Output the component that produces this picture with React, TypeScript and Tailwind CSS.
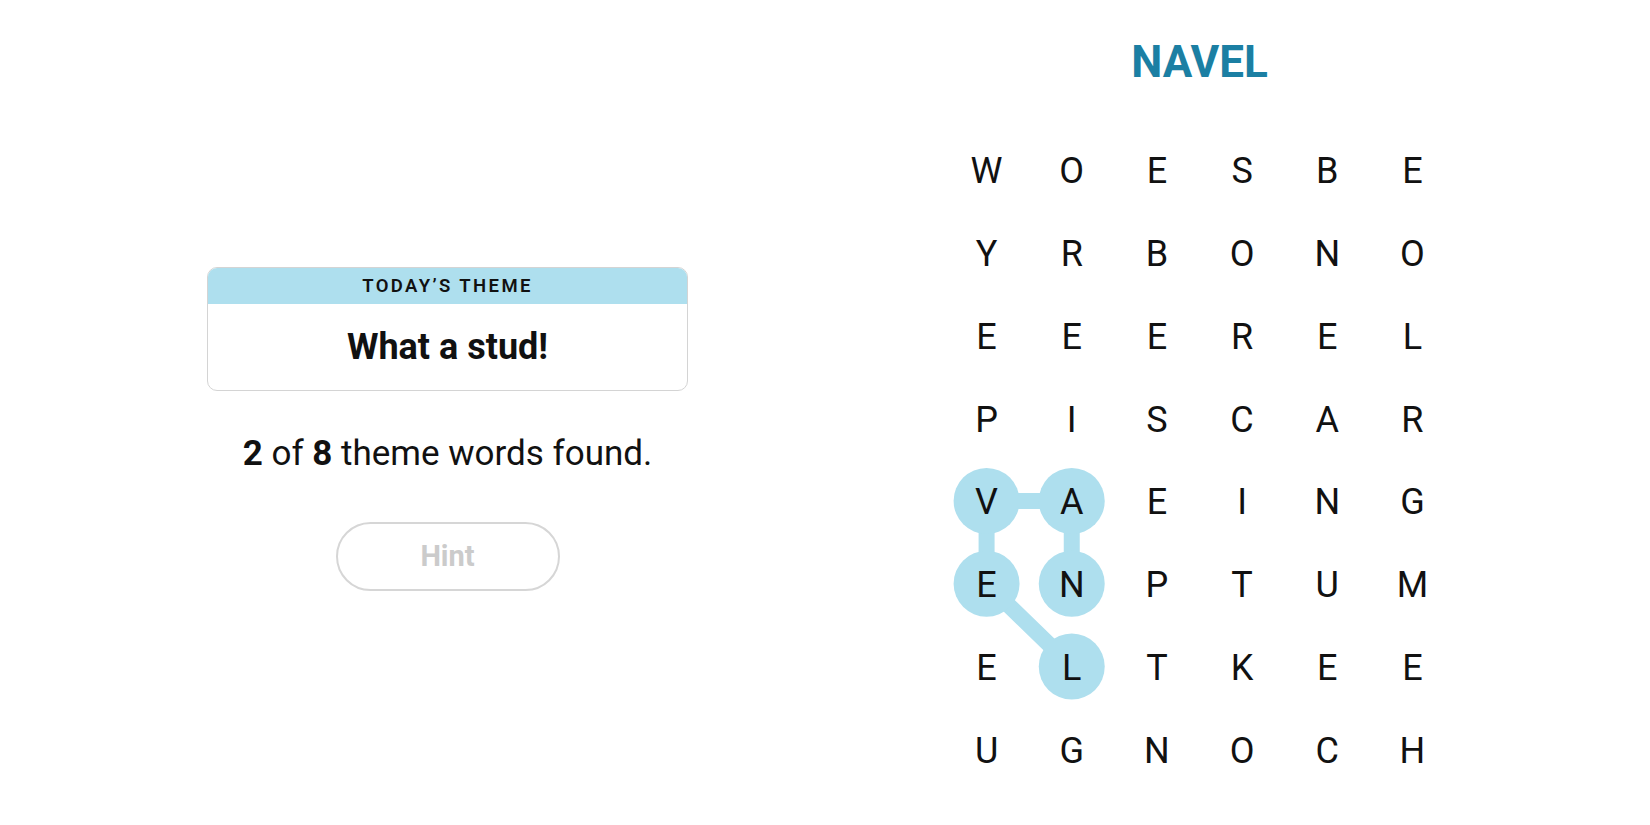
import React from 'react';

const rows = [
  'WOESBE',
  'YRBONO',
  'EEEREL',
  'PISCAR',
  'VAEING',
  'ENPTUM',
  'ELTKEE',
  'UGNOCH',
];

const CELL_W = 85.2;
const CELL_H = 82.86;

// found word path: N -> A -> V -> E -> L
const path: [number, number][] = [
  [5, 1],
  [4, 1],
  [4, 0],
  [5, 0],
  [6, 1],
];

function center([r, c]: [number, number]) {
  return { x: CELL_W / 2 + CELL_W * c, y: CELL_H / 2 + CELL_H * r };
}

function ThemeCard() {
  return (
    <div className="w-[481px] rounded-[10px] border border-[#d4d4d4] overflow-hidden">
      <div className="h-[36px] bg-[#aedfee] flex items-center justify-center">
        <span className="text-[18.5px] font-semibold tracking-[2.4px] text-[#111] leading-none">TODAY’S THEME</span>
      </div>
      <div className="h-[86px] flex items-center justify-center">
        <span className="text-[36px] font-bold text-[#111] leading-none">What a stud!</span>
      </div>
    </div>
  );
}

function Board() {
  const pts = path.map(center);
  return (
    <div className="relative w-[511px]">
      <svg className="absolute inset-0" width={511} height={663} viewBox="0 0 511.2 662.9">
        <polyline
          points={pts.map((p) => `${p.x},${p.y}`).join(' ')}
          fill="none"
          stroke="#aedfee"
          strokeWidth={16}
          strokeLinejoin="round"
        />
        {pts.map((p, i) => (
          <circle key={i} cx={p.x} cy={p.y} r={33} fill="#aedfee" />
        ))}
      </svg>
      <div className="relative grid grid-cols-6">
        {rows.map((row, r) =>
          row.split('').map((ch, c) => (
            <div
              key={`${r}-${c}`}
              className="h-[82.86px] pt-[4px] flex items-center justify-center text-[36px] leading-none text-[#111]"
            >
              {ch}
            </div>
          ))
        )}
      </div>
    </div>
  );
}

export default function App() {
  return (
    <div className="w-[1650px] h-[825px] bg-white flex font-['Roboto',sans-serif] text-[#111]">
      <div className="ml-[207px] w-[481px] pt-[267px] flex flex-col items-center">
        <ThemeCard />
        <p className="mt-[45px] text-[35px] leading-none">
          <b className="font-bold">2</b> of <b className="font-bold">8</b> theme words found.
        </p>
        <button className="mt-[51px] w-[224px] h-[69px] rounded-full border-2 border-[#d6d6d6] text-[29px] font-bold text-[#cbcbcb]">
          Hint
        </button>
      </div>
      <div className="ml-[256px] w-[511px] flex flex-col">
        <h1 className="h-[127.6px] pt-[40px] text-center text-[44px] font-bold leading-[44px] text-[#1b7fa3]">NAVEL</h1>
        <Board />
      </div>
    </div>
  );
}
